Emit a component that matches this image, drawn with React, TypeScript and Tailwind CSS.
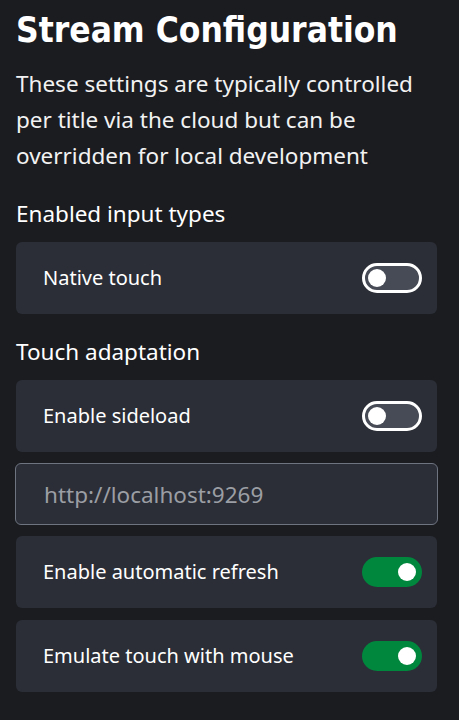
import React, { useState } from "react";

function Toggle({ on }: { on: boolean }) {
  return (
    <div
      className={
        on
          ? "w-[60px] h-[30px] rounded-full bg-[#00873e] flex items-center justify-end px-[6px] shrink-0"
          : "w-[60px] h-[30px] rounded-full bg-[#474b55] border-[3px] border-white flex items-center justify-start px-[3px] shrink-0"
      }
    >
      <div className="w-[18px] h-[18px] rounded-full bg-white" />
    </div>
  );
}

function Row({ label, on }: { label: string; on: boolean }) {
  return (
    <div className="h-[72px] rounded-md bg-[#2b2e36] flex items-center justify-between pl-[27px] pr-[15px]">
      <span className="text-[20px] leading-[28px]">{label}</span>
      <Toggle on={on} />
    </div>
  );
}

export default function App() {
  const [url] = useState("");

  return (
    <div className="min-h-screen bg-[#1b1c20] text-white font-['Noto_Sans',sans-serif]">
      <div className="w-[421px] ml-[16px] pt-[8px]">
        <h1 className="text-[35px] leading-[44px] font-bold font-['DejaVu_Sans_Condensed','DejaVu_Sans',sans-serif]">
          Stream Configuration
        </h1>
        <p className="mt-[14px] text-[22.5px] leading-[36px] text-[#f2f2f2]">
          These settings are typically controlled
          <br />
          per title via the cloud but can be
          <br />
          overridden for local development
        </p>
        <h2 className="mt-[24px] text-[22.5px] leading-[32px]">Enabled input types</h2>
        <div className="mt-[12px]">
          <Row label="Native touch" on={false} />
        </div>
        <h2 className="mt-[22px] text-[22.5px] leading-[32px]">Touch adaptation</h2>
        <div className="mt-[12px] flex flex-col gap-[11px]">
          <Row label="Enable sideload" on={false} />
          <input
            value={url}
            readOnly
            placeholder="http://localhost:9269"
            className="h-[62px] -mx-px rounded-md border border-[#6e7480] bg-[#2b2e36] pl-[28px] text-[22.5px] text-white placeholder:text-[#9b9ea4] outline-none"
          />
          <Row label="Enable automatic refresh" on={true} />
          <div className="mt-px">
            <Row label="Emulate touch with mouse" on={true} />
          </div>
        </div>
      </div>
    </div>
  );
}
